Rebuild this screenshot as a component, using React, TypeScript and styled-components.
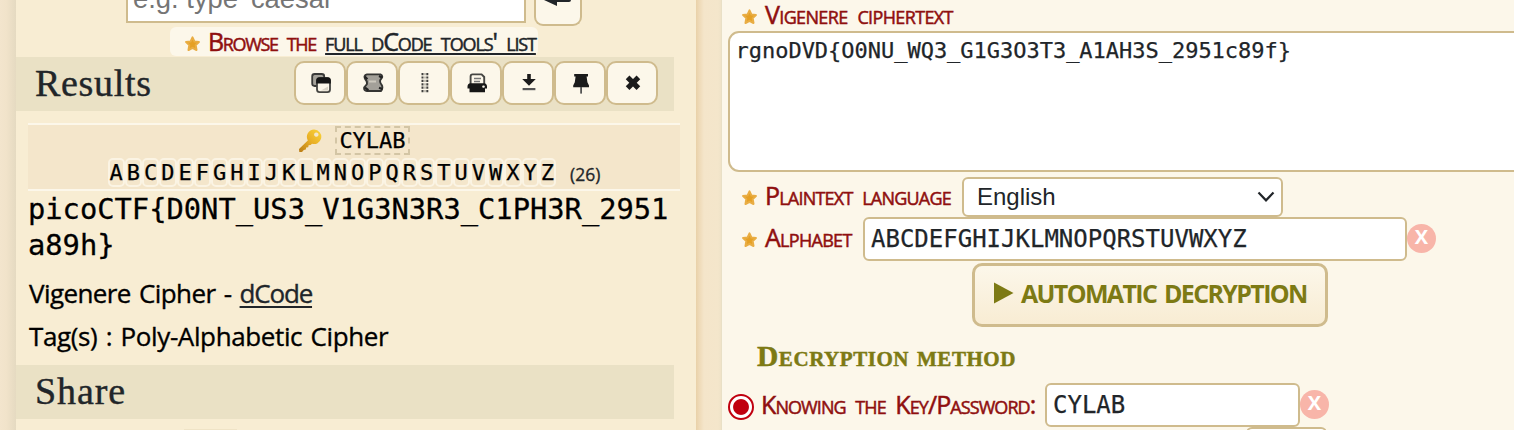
import React from 'react';
import styled, { createGlobalStyle } from 'styled-components';

const c = {
  sand: '#cfbb8d',
  cream: '#fcf7ea',
  panel: '#f8edd3',
  bar: '#eae1c5',
  ink: '#212529',
  red: '#8f0f0f',
  olive: '#7d7a14',
};
const sans = '"Open Sans", "Liberation Sans", sans-serif';
const serif = '"Liberation Serif", serif';
const mono = '"DejaVu Sans Mono", monospace';

const Global = createGlobalStyle`
  *, *::before, *::after { box-sizing: border-box; }
  body { margin: 0; overflow: hidden; background: #f4e6cb; color: ${c.ink}; font-family: ${sans}; }
`;

const Page = styled.div`
  display: flex;
  width: 1514px;
  height: 430px;
  overflow: hidden;
`;
const Edge = styled.div`
  flex: 0 0 16px;
  background: linear-gradient(90deg, #f3e5cd 0%, #f1e3ca 40%, #e5dac1 100%);
`;
const Gutter = styled.div`
  flex: 0 0 26px;
  background: linear-gradient(90deg, #e9d1a8 0, #eed9b6 3px, #f4e5ca 8px, #f4e6cb 22px, #f0e3c8 24.5px, #e9e0c6 25px);
`;
const Left = styled.aside`
  flex: 0 0 680px;
  display: flex;
  flex-direction: column;
  background: ${c.panel};
  & > * { flex-shrink: 0; }
`;
const Right = styled.main`
  flex: 1;
  min-width: 0;
  display: flex;
  flex-direction: column;
  padding-left: 6px;
  background: ${c.cream};
`;

const SearchRow = styled.div`
  display: flex;
  align-items: flex-end;
  gap: 8px;
  height: 26px;
  padding-left: 110px;
`;
const SearchInput = styled.div`
  width: 400px;
  height: 23px;
  margin-bottom: 3px;
  padding-left: 5px;
  border: 2px solid ${c.sand};
  border-top: 0;
  background: #fff;
  color: #757575;
  font: 27.4px/0 "Liberation Sans", sans-serif;
  white-space: pre;
  overflow: hidden;
  & > span { display: block; margin-top: -18px; line-height: 34px; }
`;
const EnterButton = styled.div`
  width: 48px;
  height: 26px;
  display: flex;
  justify-content: center;
  border: 2px solid ${c.sand};
  border-top: 0;
  border-radius: 0 0 9px 9px;
  background: ${c.cream};
`;
const Browse = styled.div`
  align-self: flex-start;
  display: flex;
  align-items: center;
  width: 368px;
  height: 29px;
  margin: 1px 0 1px 154px;
  padding: 0 0 1px 14px;
  border-radius: 6px;
  background: ${c.cream};
`;
const Caps = styled.span<{ $track: number; $link?: boolean }>`
  font: 400 25px/27px ${sans};
  font-variant: small-caps;
  white-space: pre;
  letter-spacing: ${(p) => p.$track}px;
  word-spacing: 4px;
  color: ${(p) => (p.$link ? c.ink : c.red)};
  -webkit-text-stroke: 0.5px currentColor;
  ${(p) => p.$link && 'text-decoration: underline; text-decoration-thickness: 2px; text-underline-offset: 2px;'}
`;

const Bar = styled.div`
  display: flex;
  width: 658px;
  height: 54px;
  padding-left: 19px;
  background: ${c.bar};
`;
const BarTitle = styled.h2<{ $track: number }>`
  margin: 0;
  width: 259px;
  font: 400 38px/52px ${serif};
  letter-spacing: ${(p) => p.$track}px;
  -webkit-text-stroke: 0.4px currentColor;
`;
const Tool = styled.div`
  width: 52px;
  height: 44px;
  margin-top: 4px;
  padding-left: 2px;
  display: flex;
  align-items: center;
  justify-content: center;
  border: 2px solid ${c.sand};
  border-radius: 10px;
  background: ${c.cream};
`;

const KeyBlock = styled.div`
  width: 652px;
  height: 68px;
  margin: 12px 0 0 12px;
  border: solid ${c.cream};
  border-width: 2px 0;
  background: #f4e6cb;
`;
const KeyRow = styled.div<{ $gap: number }>`
  display: flex;
  align-items: center;
  justify-content: center;
  gap: ${(p) => p.$gap}px;
  height: 32px;
  padding-bottom: 1px;
`;
const KeyWord = styled.span`
  height: 29px;
  padding: 0 2px;
  border: 2px dashed #d3c5a5;
  color: #000;
  font: 22px/25px ${mono};
  -webkit-text-stroke: 0.25px currentColor;
`;
const Letters = styled.div`
  display: flex;
`;
const Letter = styled.span`
  height: 29px;
  border: 2px solid #fbf4e4;
  border-radius: 5px;
  color: #000;
  font: 22px/25px ${mono};
  -webkit-text-stroke: 0.25px currentColor;
`;
const Count = styled.span`
  font: 17.5px/20px ${sans};
  padding-top: 2px;
  -webkit-text-stroke: 0.3px currentColor;
`;
const Plain = styled.p`
  width: 652px;
  margin: 0 0 8px 12px;
  color: #000;
  font: 28.75px/36px ${mono};
  word-break: break-all;
  -webkit-text-stroke: 0.3px currentColor;
`;
const Info = styled.p`
  margin: 0 0 0 13px;
  height: 43px;
  color: #000;
  font: 400 26px/44px ${sans};
  white-space: pre;
  -webkit-text-stroke: 0.35px currentColor;
`;
const Track = styled.span<{ $track: number }>`
  letter-spacing: ${(p) => p.$track}px;
  word-spacing: 2px;
`;
const InfoLink = styled.span`
  letter-spacing: -1.2px;
  color: ${c.ink};
  text-decoration: underline;
  text-decoration-thickness: 2px;
  text-underline-offset: 3px;
`;
const Spacer = styled.div<{ $h: number }>`
  flex: 0 0 ${(p) => p.$h}px;
`;
const ShareTop = styled.div`
  width: 53px;
  height: 2px;
  margin: 10px 0 0 168px;
  background: #efe3c6;
`;

const Field = styled.div<{ $h: number; $indent?: number }>`
  display: flex;
  flex: 0 0 ${(p) => p.$h}px;
  align-items: center;
  padding-left: ${(p) => p.$indent ?? 13}px;
`;
const Label = styled.div<{ $w?: number; $lift: number }>`
  display: flex;
  align-items: center;
  flex: 0 0 ${(p) => (p.$w ? p.$w + 'px' : 'auto')};
  padding-bottom: ${(p) => p.$lift}px;
`;
const StarSvg = styled.svg`
  display: block;
  flex: none;
  margin: 5px 8px 0 0;
`;
const TextArea = styled.div`
  flex: 0 0 141px;
  width: 820px;
  padding: 3px 5.5px;
  border: 2px solid ${c.sand};
  border-radius: 11px;
  background: #fff;
  font: 22px/30px ${mono};
  letter-spacing: -0.02px;
  -webkit-text-stroke: 0.25px currentColor;
`;
const Select = styled.div`
  display: flex;
  align-items: center;
  justify-content: space-between;
  width: 321px;
  height: 40px;
  padding: 0 6px 0 13px;
  border: 2px solid ${c.sand};
  border-radius: 6px;
  background: #fff;
  font: 24px/36px "Liberation Sans", sans-serif;
`;
const Input = styled.div<{ $w: number }>`
  width: ${(p) => p.$w}px;
  height: 44px;
  padding-left: 6px;
  border: 2px solid ${c.sand};
  border-radius: 6px;
  background: #fff;
  font: 24px/41px ${mono};
  -webkit-text-stroke: 0.25px currentColor;
`;
const Clear = styled.div`
  width: 29px;
  height: 29px;
  margin-bottom: 1px;
  border-radius: 50%;
  background: #f8b5a9;
  color: #fff;
  font: 700 20px/26px ${sans};
  text-align: center;
`;
const Run = styled.div`
  flex: 0 0 64px;
  display: flex;
  align-items: center;
  gap: 7px;
  width: 356px;
  margin: 2px 0 0 244px;
  padding: 0 0 4px 19px;
  border: 3px solid ${c.sand};
  border-radius: 10px;
  background: linear-gradient(${c.cream}, #f8ecd3);
  color: ${c.olive};
  font: 700 25px/34px ${sans};
  letter-spacing: -1.65px;
  word-spacing: 3px;
  white-space: nowrap;
`;
const Heading = styled.h3`
  flex: 0 0 56px;
  margin: 0;
  padding: 2px 0 0 29px;
  color: ${c.olive};
  font: 700 29.5px/54px ${serif};
  font-variant: small-caps;
  letter-spacing: 0.55px;
  -webkit-text-stroke: 0.5px currentColor;
`;
const Radio = styled.span`
  flex: none;
  width: 26px;
  height: 26px;
  margin: 5px 7px 0 0;
  border: 2px solid #c0000f;
  border-radius: 50%;
  background: radial-gradient(circle, #c0000f 7.4px, #fff 8.4px);
`;
const NextSelect = styled.div`
  flex: 0 0 12px;
  width: 81px;
  margin-left: 518px;
  border: 2px solid ${c.sand};
  border-radius: 6px;
  background: #fff;
`;

const Star = () => (
  <StarSvg width="16" height="16" viewBox="0 0 16 16">
    <path d="M8.500 1.400l1.900 4 4.500.6-3.200 3.100.8 4.900-4-2.200L4.500 14l.8-4.900L2.100 6l4.500-.6z" fill="#e5a024" stroke="#e9ad43" strokeWidth="2" strokeLinejoin="round" />
  </StarSvg>
);

const icons = [
  <g>
    <rect x="2.2" y="2" width="12" height="12" rx="2.4" fill="#a5a29a" stroke="#3a3a38" strokeWidth="1.8" />
    <rect x="7" y="6.2" width="13" height="14" rx="2.6" fill="#fcf7ea" stroke="#454542" strokeWidth="1.8" />
    <path d="M6.2 11.4V8.6Q6.2 5.2 9.6 5.2h7.8q3.4 0 3.4 3.4v2.8z" fill="#151515" />
    <path d="M11 18.6l7-4v4z" fill="#d9d4c6" />
  </g>,
  <g>
    <path d="M5 2.4h13.500q2.300 1 1.500 3.200l-1.800 2.600q-.6 2.400 1.400 4.600 1.800 3.200-.6 6.200H5q-3.400-.6-2.800-3.600L4.800 12.400Q5.600 9.600 3.200 7 1.200 3.400 5 2.400z" fill="#a3a099" stroke="#353533" strokeWidth="1.9" />
    <path d="M2.800 4.600l2.600 2.600M17 4l3 1.400M3 15.600l3.400 2.600M17 15.800l3.400 1.2" stroke="#222" strokeWidth="2.2" />
    <path d="M7 9.500h7" stroke="#ccc8bd" strokeWidth="2" />
  </g>,
  <g stroke="#3f3f3d" strokeWidth="2" strokeDasharray="2.2 1.2">
    <path d="M8.500 1v20M13.300 1v20" />
    <path d="M11 1v20" stroke="#b7b3a8" strokeWidth="1.6" />
  </g>,
  <g>
    <path d="M4.600 12V4.400q0-2 2-2h9l2.600 2.600V12" fill="#fcf7ea" stroke="#454542" strokeWidth="1.9" />
    <path d="M8 6.400h7M8 9.400h6" stroke="#777" strokeWidth="1.5" />
    <path d="M4.500 11.200h13.500q3 .4 3 3.400v2h-2v3.600H3.500v-3.600h-2v-2q0-3 3-3.400z" fill="#161616" />
    <rect x="16.200" y="13.600" width="2.600" height="2.200" rx="1" fill="#fcf7ea" />
  </g>,
  <g fill="#1b1b1b">
    <path d="M9.200 2h3.600v5h5L11 13.800 4.200 7h5z" />
    <rect x="4.600" y="16" width="12.800" height="2.200" fill="#555" />
  </g>,
  <g fill="#1b1b1b">
    <path d="M4.200 2h13.800v2.600h-1.400l.8 5.600 1.600 3.400v1.600H3.200v-1.600l1.600-3.400.8-5.600H4.200z" />
    <rect x="10.200" y="15" width="1.800" height="6.600" fill="#555" />
  </g>,
  <path d="M5.600 5.400l10.800 10.800M16.400 5.400L5.600 16.200" stroke="#1b1b1b" strokeWidth="5.2" />,
];

export default function App() {
  return (
    <>
      <Global />
      <Page>
        <Edge />
        <Left>
          <SearchRow>
            <SearchInput><span>e.g. type 'caesar'</span></SearchInput>
            <EnterButton>
              <svg width="30" height="8" viewBox="0 0 30 8">
                <path d="M1 0L14 6V2h12q2 0 2-2z" fill={c.ink} />
              </svg>
            </EnterButton>
          </SearchRow>
          <Browse>
            <Star />
            <Caps $track={-1.35}>Browse the </Caps>
            <Caps $track={-1.12} $link>full dCode tools' list</Caps>
          </Browse>
          <Bar>
            <BarTitle $track={0.7}>Results</BarTitle>
            {icons.map((icon, i) => (
              <Tool key={i}>
                <svg width="22" height="22" viewBox="0 0 22 22" fill="none">{icon}</svg>
              </Tool>
            ))}
          </Bar>
          <KeyBlock>
            <KeyRow $gap={13}>
              <svg width="24" height="24" viewBox="0 0 24 24">
                <defs>
                  <linearGradient id="gold" x1="1" y1="0" x2="0" y2="1">
                    <stop offset="0" stopColor="#fbd63a" />
                    <stop offset="0.5" stopColor="#e8ae26" />
                    <stop offset="1" stopColor="#b97c17" />
                  </linearGradient>
                </defs>
                <path fillRule="evenodd" fill="url(#gold)" d="M16 .6a7.200 7.200 0 0 1 7 9.200 7.200 7.200 0 0 1-9 5l-1.400 1.200-2 .2-.4 2-2 .3-.4 2-2 .4-1.800 2.200-2.700-.2-.3-3L9.800 11.400A7.200 7.200 0 0 1 16 .6zm2.300 2.800a2.200 2.200 0 1 0 .01 0z" />
              </svg>
              <KeyWord>CYLAB</KeyWord>
            </KeyRow>
            <KeyRow $gap={14}>
              <Letters>
                {'ABCDEFGHIJKLMNOPQRSTUVWXYZ'.split('').map((l) => <Letter key={l}>{l}</Letter>)}
              </Letters>
              <Count>(26)</Count>
            </KeyRow>
          </KeyBlock>
          <Plain>{'picoCTF{D0NT_US3_V1G3N3R3_C1PH3R_2951a89h}'}</Plain>
          <Info><Track $track={-0.59}>Vigenere Cipher - </Track><InfoLink>dCode</InfoLink></Info>
          <Info><Track $track={-0.38}>Tag(s) : Poly-Alphabetic Cipher</Track></Info>
          <Spacer $h={8} />
          <Bar><BarTitle $track={0.9}>Share</BarTitle></Bar>
          <ShareTop />
        </Left>
        <Gutter />
        <Right>
          <Field $h={31}>
            <Label $lift={2}><Star /><Caps $track={-0.64}>Vigenere ciphertext</Caps></Label>
          </Field>
          <TextArea>{'rgnoDVD{O0NU_WQ3_G1G3O3T3_A1AH3S_2951c89f}'}</TextArea>
          <Spacer $h={5} />
          <Field $h={40}>
            <Label $w={221} $lift={3}><Star /><Caps $track={-0.79}>Plaintext language</Caps></Label>
            <Select>
              English
              <svg width="18" height="12" viewBox="0 0 18 12" fill="none">
                <path d="M1.500 1.500L9 9.300l7.500-7.800" stroke={c.ink} strokeWidth="2.2" />
              </svg>
            </Select>
          </Field>
          <Field $h={44}>
            <Label $w={122} $lift={3}><Star /><Caps $track={-0.7}>Alphabet</Caps></Label>
            <Input $w={544}>ABCDEFGHIJKLMNOPQRSTUVWXYZ</Input>
            <Clear>X</Clear>
          </Field>
          <Run>
            <svg width="20" height="23" viewBox="0 0 20 23"><path d="M0 .5L19.500 11 0 21.500z" fill={c.olive} /></svg>
            AUTOMATIC DECRYPTION
          </Run>
          <Heading>Decryption method</Heading>
          <Field $h={44} $indent={0}>
            <Label $w={317} $lift={2}><Radio /><Caps $track={-0.92}>Knowing the Key/Password:</Caps></Label>
            <Input $w={255}>CYLAB</Input>
            <Clear>X</Clear>
          </Field>
          <NextSelect />
        </Right>
      </Page>
    </>
  );
}
